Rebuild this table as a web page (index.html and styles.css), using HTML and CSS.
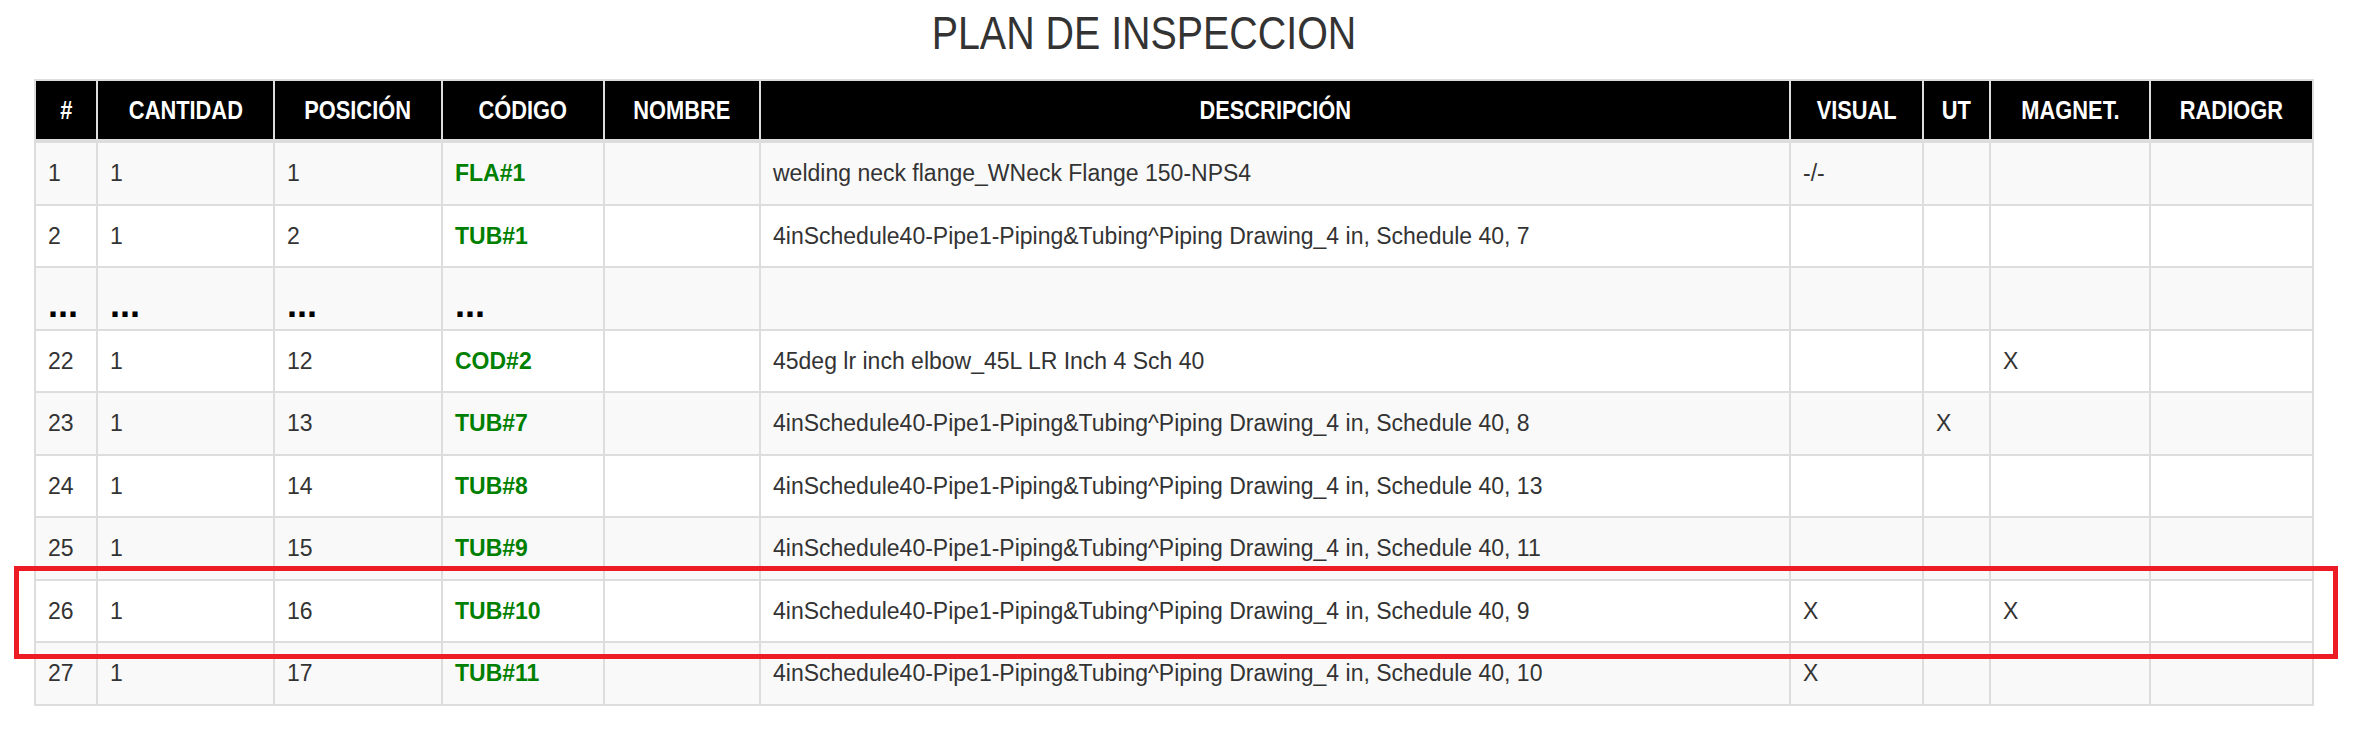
FILE: index.html
```html
<!DOCTYPE html>
<html lang="es">
<head>
<meta charset="utf-8">
<title>Plan de inspeccion</title>
<link rel="stylesheet" href="styles.css">
</head>
<body>
<div class="page">
  <h1 class="title"><span class="narrow">PLAN DE INSPECCION</span></h1>
  <table class="plan">
    <thead>
      <tr>
        <th class="c-num"><span class="narrow">#</span></th>
        <th class="c-cant"><span class="narrow">CANTIDAD</span></th>
        <th class="c-pos"><span class="narrow">POSICIÓN</span></th>
        <th class="c-cod"><span class="narrow">CÓDIGO</span></th>
        <th class="c-nom"><span class="narrow">NOMBRE</span></th>
        <th class="c-desc"><span class="narrow">DESCRIPCIÓN</span></th>
        <th class="c-vis"><span class="narrow">VISUAL</span></th>
        <th class="c-ut"><span class="narrow">UT</span></th>
        <th class="c-mag"><span class="narrow">MAGNET.</span></th>
        <th class="c-rad"><span class="narrow">RADIOGR</span></th>
      </tr>
    </thead>
    <tbody>
      <tr>
        <td>1</td><td>1</td><td>1</td><td class="code">FLA#1</td><td></td>
        <td>welding neck flange_WNeck Flange 150-NPS4</td><td>-/-</td><td></td><td></td><td></td>
      </tr>
      <tr>
        <td>2</td><td>1</td><td>2</td><td class="code">TUB#1</td><td></td>
        <td>4inSchedule40-Pipe1-Piping&amp;Tubing^Piping Drawing_4 in, Schedule 40, 7</td><td></td><td></td><td></td><td></td>
      </tr>
      <tr class="gap">
        <td>...</td><td>...</td><td>...</td><td>...</td><td></td>
        <td></td><td></td><td></td><td></td><td></td>
      </tr>
      <tr>
        <td>22</td><td>1</td><td>12</td><td class="code">COD#2</td><td></td>
        <td>45deg lr inch elbow_45L LR Inch 4 Sch 40</td><td></td><td></td><td>X</td><td></td>
      </tr>
      <tr>
        <td>23</td><td>1</td><td>13</td><td class="code">TUB#7</td><td></td>
        <td>4inSchedule40-Pipe1-Piping&amp;Tubing^Piping Drawing_4 in, Schedule 40, 8</td><td></td><td>X</td><td></td><td></td>
      </tr>
      <tr>
        <td>24</td><td>1</td><td>14</td><td class="code">TUB#8</td><td></td>
        <td>4inSchedule40-Pipe1-Piping&amp;Tubing^Piping Drawing_4 in, Schedule 40, 13</td><td></td><td></td><td></td><td></td>
      </tr>
      <tr>
        <td>25</td><td>1</td><td>15</td><td class="code">TUB#9</td><td></td>
        <td>4inSchedule40-Pipe1-Piping&amp;Tubing^Piping Drawing_4 in, Schedule 40, 11</td><td></td><td></td><td></td><td></td>
      </tr>
      <tr>
        <td>26</td><td>1</td><td>16</td><td class="code">TUB#10</td><td></td>
        <td>4inSchedule40-Pipe1-Piping&amp;Tubing^Piping Drawing_4 in, Schedule 40, 9</td><td>X</td><td></td><td>X</td><td></td>
      </tr>
      <tr>
        <td>27</td><td>1</td><td>17</td><td class="code">TUB#11</td><td></td>
        <td>4inSchedule40-Pipe1-Piping&amp;Tubing^Piping Drawing_4 in, Schedule 40, 10</td><td>X</td><td></td><td></td><td></td>
      </tr>
    </tbody>
  </table>
  <div class="highlight"></div>
</div>
</body>
</html>
```

FILE: styles.css
```css
* { box-sizing: border-box; }

html, body {
  margin: 0;
  padding: 0;
  background: #fff;
}

body {
  font-family: "Liberation Sans", Arial, sans-serif;
  color: #333;
}

.page {
  position: relative;
  padding: 8px 0 0 34px;
}

.narrow {
  display: inline-block;
  transform-origin: 50% 50%;
}

.title {
  width: 2280px;
  margin: 0 0 21px 0;
  padding-right: 60px;
  text-align: center;
  font-family: "Liberation Sans", Arial, sans-serif;
  font-weight: normal;
  font-size: 46px;
  line-height: 50px;
  color: #333;
}

.title .narrow {
  transform: scaleX(0.856);
}

.plan {
  width: 2280px;
  table-layout: fixed;
  border-collapse: separate;
  border-spacing: 0;
  border-top: 2px solid #ddd;
  border-left: 2px solid #ddd;
}

.plan th {
  height: 62px;
  padding: 0 4px;
  background: #000;
  color: #fff;
  font-family: "Liberation Sans", Arial, sans-serif;
  font-weight: bold;
  font-size: 26px;
  line-height: 30px;
  text-align: center;
  vertical-align: middle;
  white-space: nowrap;
  border-right: 2px solid #ddd;
  border-bottom: 4px solid #ddd;
}

.plan th .narrow {
  transform: scaleX(0.84);
}

.c-num  { width: 62px; }
.c-cant { width: 177px; }
.c-pos  { width: 168px; }
.c-cod  { width: 162px; }
.c-nom  { width: 156px; }
.c-desc { width: 1030px; }
.c-vis  { width: 133px; }
.c-ut   { width: 67px; }
.c-mag  { width: 160px; }
.c-rad  { width: 163px; }

.plan td {
  height: 62.5px;
  padding: 0 12px;
  font-size: 23px;
  line-height: 30px;
  text-align: left;
  vertical-align: middle;
  white-space: nowrap;
  border-right: 2px solid #ddd;
  border-bottom: 2px solid #ddd;
}

.plan tbody tr:nth-child(odd) td {
  background: #f9f9f9;
}

.plan td.code {
  color: #008000;
  font-weight: bold;
}

.plan tr.gap td {
  vertical-align: bottom;
  padding-bottom: 14px;
  font-size: 36px;
  font-weight: bold;
  line-height: 20px;
  color: #000;
}

.highlight {
  position: absolute;
  left: 14px;
  top: 566px;
  width: 2324px;
  height: 93px;
  border: 5px solid #ed1c24;
  pointer-events: none;
}
```
